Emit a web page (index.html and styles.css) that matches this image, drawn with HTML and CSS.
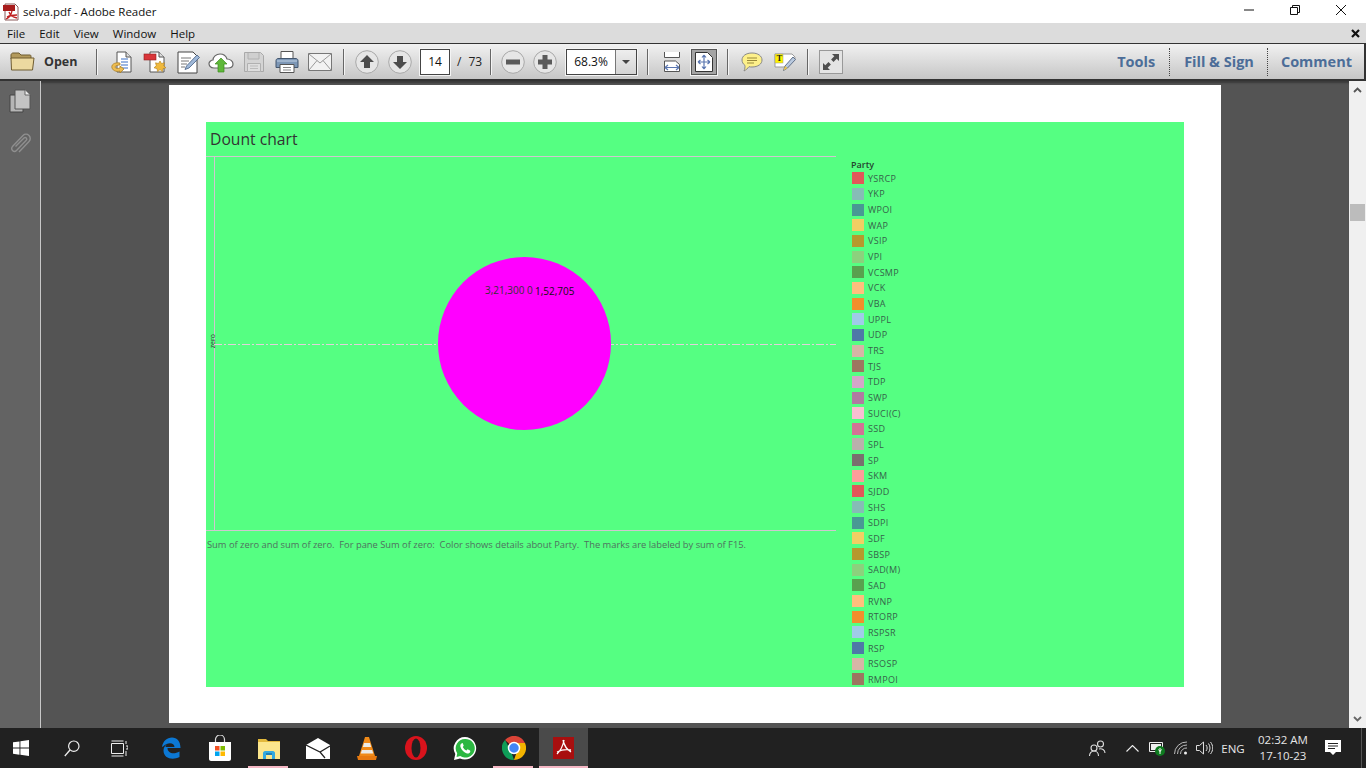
FILE: index.html
```html
<!DOCTYPE html>
<html lang="en">
<head>
    <meta charset="UTF-8">
    <title>selva.pdf - Adobe Reader</title>
    <link rel="stylesheet" href="styles.css">
</head>
<body>
    <!-- window title -->
    <div class="titlebar">
        <svg class="app-icon" width="17" height="18" viewBox="0 0 17 18">
            <path d="M2 1h10l3 3v13H2z" fill="#fff" stroke="#8a5a5a"/>
            <rect x="0" y="2" width="12" height="6" fill="#a81c1c"/>
            <path d="M6 9c1 3 3 5 8 6M9 8c-1 4-3 7-6 8M4 14c3-2 7-2 10-2" fill="none" stroke="#c02020" stroke-width="1.3"/>
        </svg>
        <span class="title-text">selva.pdf - Adobe Reader</span>
        <div class="win-buttons">
            <div class="win-btn"><svg width="12" height="12" viewBox="0 0 12 12"><path d="M1 6h10" stroke="#111" fill="none"/></svg></div>
            <div class="win-btn"><svg width="12" height="12" viewBox="0 0 12 12"><path d="M1.5 3.5h7v7h-7zM3.5 3.5v-2h7v7h-2" stroke="#111" fill="none"/></svg></div>
            <div class="win-btn"><svg width="12" height="12" viewBox="0 0 12 12"><path d="M1 1l10 10M11 1L1 11" stroke="#111" fill="none"/></svg></div>
        </div>
    </div>

    <!-- menu -->
    <div class="menubar">
        <span>File</span><span>Edit</span><span>View</span><span>Window</span><span>Help</span>
        <svg class="menu-close" width="9" height="9" viewBox="0 0 9 9"><path d="M1 1l7 7M8 1L1 8" stroke="#111" stroke-width="2.2" fill="none"/></svg>
    </div>

    <!-- toolbar -->
    <div class="toolbar">
        <div class="tb-folder">
            <svg width="25" height="21" viewBox="0 0 25 21">
                <path d="M1 4c0-1 1-2 2-2h6l2 2h9c1 0 1 1 1 2v2H1z" fill="#b39a5c" stroke="#6f5c30"/>
                <path d="M1.5 19L1 7h23l-1.500 12z" fill="#ecd9a0" stroke="#6f5c30"/>
            </svg>
        </div>
        <span class="tb-open">Open</span>
        <i class="tb-sep first"></i>

        <div class="tb-btn">
            <svg width="24" height="24" viewBox="0 0 24 24">
                <path d="M7 2h9l5 5v15H7z" fill="#fff" stroke="#555"/>
                <path d="M16 2v5h5" fill="#ddd" stroke="#555"/>
                <path d="M11 9h7M11 12h7M11 15h7M11 18h7" stroke="#3b6fc4"/>
                <path d="M10 13C4 12 1 15 2 18s5 4 8 3v2l4-4-4-3v2c-3 1-5 0-5-1s2-2 5-2z" fill="#eebd52" stroke="#a67a1e" stroke-width=".7"/>
            </svg>
        </div>
        <div class="tb-btn">
            <svg width="24" height="24" viewBox="0 0 24 24">
                <path d="M7 2h9l5 5v15H7z" fill="#fff" stroke="#555"/>
                <path d="M16 2v5h5" fill="#ddd" stroke="#555"/>
                <rect x="1" y="4" width="12" height="6" fill="#d9363a" stroke="#902020" stroke-width=".6"/>
                <path d="M17 11l1.500 2.500 3-.7-.8 3 2.300 2-3 .8-.6 3-2.400-2-2.400 2-.6-3-3-.8 2.300-2-.8-3 3 .7z" fill="#f0b93c" stroke="#b0801c" stroke-width=".6"/>
            </svg>
        </div>
        <div class="tb-btn">
            <svg width="24" height="24" viewBox="0 0 24 24">
                <path d="M2 2h15l4 4v17H2z" fill="#fff" stroke="#444"/>
                <path d="M5 8h10M5 11h8M5 14h6M5 17h4" stroke="#777"/>
                <path d="M21 5l2.500 2.500L13 18l-4 1.500L10.500 16z" fill="#9fb8d8" stroke="#445d82" stroke-width=".8"/>
            </svg>
        </div>
        <div class="tb-btn">
            <svg width="26" height="22" viewBox="0 0 26 22">
                <path d="M6 17C2 17 1 14 1 12.5S3 9 5 9c0-3 3-6 7-6s6 2 7 5c3 0 6 2 6 5s-2 4-5 4z" fill="#fff" stroke="#666" stroke-width="1.2"/>
                <path d="M13 7l6 6h-3v8h-6v-8H7z" fill="#5fb83a" stroke="#3d8a20" stroke-width=".7"/>
            </svg>
        </div>
        <div class="tb-btn">
            <svg width="22" height="22" viewBox="0 0 22 22">
                <path d="M1.5 1.5h16l3 3v16h-19z" fill="#d4d4d4" stroke="#a9a9a9"/>
                <path d="M5 2v6h11V2" fill="#cfcfcf" stroke="#b0b0b0"/>
                <path d="M4.5 12.5h13v8h-13z" fill="#dedede" stroke="#b0b0b0"/>
                <path d="M7 15h8M7 17.5h8" stroke="#bbb"/>
            </svg>
        </div>
        <div class="tb-btn">
            <svg width="24" height="24" viewBox="0 0 24 24">
                <path d="M6 1.5h12v7H6z" fill="#fff" stroke="#555"/>
                <path d="M3 8.5h18c1 0 2 1 2 2v7H1v-7c0-1 1-2 2-2z" fill="#7d97b6" stroke="#44576f"/>
                <path d="M2 11h20" stroke="#c3d3e6"/>
                <path d="M5 14.5h14v8H5z" fill="#fff" stroke="#555"/>
                <path d="M8 17.5h8M8 20h8" stroke="#888"/>
            </svg>
        </div>
        <div class="tb-btn">
            <svg width="24" height="18" viewBox="0 0 24 18">
                <path d="M.5.5h23v17H.5z" fill="#f2f2f2" stroke="#777"/>
                <path d="M1 1l11 9 11-9M1 17l8-9.500M23 17l-8-9.500" fill="none" stroke="#9a9a9a"/>
            </svg>
        </div>
        <i class="tb-sep after-mail"></i>

        <div class="tb-btn">
            <svg width="24" height="24" viewBox="0 0 24 24">
                <circle cx="12" cy="12" r="11.3" fill="#e6e6e6" stroke="#a8a8a8"/>
                <path d="M12 5l7 7h-4v6H9v-6H5z" fill="#4d4d4d"/>
            </svg>
        </div>
        <div class="tb-btn">
            <svg width="24" height="24" viewBox="0 0 24 24">
                <circle cx="12" cy="12" r="11.3" fill="#e6e6e6" stroke="#a8a8a8"/>
                <path d="M12 19l7-7h-4V6H9v6H5z" fill="#4d4d4d"/>
            </svg>
        </div>
        <div class="page-box">14</div>
        <span class="page-total"><b>/</b>73</span>
        <i class="tb-sep after-total"></i>

        <div class="tb-btn zoom-btn">
            <svg width="24" height="24" viewBox="0 0 24 24">
                <circle cx="12" cy="12" r="11.3" fill="#e6e6e6" stroke="#a8a8a8"/>
                <path d="M5 9.5h14v5H5z" fill="#5a5a5a"/>
            </svg>
        </div>
        <div class="tb-btn zoom-btn">
            <svg width="24" height="24" viewBox="0 0 24 24">
                <circle cx="12" cy="12" r="11.3" fill="#e6e6e6" stroke="#a8a8a8"/>
                <path d="M9.5 5h5v4.500H19v5h-4.500V19h-5v-4.500H5v-5h4.500z" fill="#5a5a5a"/>
            </svg>
        </div>
        <div class="zoom-box">
            <span class="zoom-value">68.3%</span>
            <span class="zoom-arrow"><i></i></span>
        </div>
        <i class="tb-sep after-zoom"></i>

        <div class="tb-btn">
            <svg width="18" height="20" viewBox="0 0 18 20">
                <path d="M1.5 0v5.500h15V0" fill="#fff" stroke="#555"/>
                <path d="M1.5 19.500V9h11l4 3.500v7z" fill="#fff" stroke="#555"/>
                <path d="M2 15.500h14M2 15.500l3-2.500M2 15.500l3 2.500M16 15.500l-3-2.500M16 15.500l-3 2.500" fill="none" stroke="#5a76b0" stroke-width="1.2"/>
            </svg>
        </div>
        <div class="tb-fit">
            <svg width="18" height="20" viewBox="0 0 18 20">
                <path d="M.5.5h12l5 5v14H.5z" fill="#fff" stroke="#333"/>
                <path d="M9 3v14M3 10h12M9 3L7 5.500M9 3l2 2.500M9 17l-2-2.500M9 17l2-2.500M3 10l2.500-2M3 10l2.500 2M15 10l-2.500-2M15 10l-2.500 2" fill="none" stroke="#5a76b0" stroke-width="1.2"/>
            </svg>
        </div>
        <i class="tb-sep after-fit"></i>

        <div class="tb-btn">
            <svg width="22" height="20" viewBox="0 0 22 20">
                <path d="M11 1c6 0 10 3 10 7s-4 7-10 7c-1 0-2 0-3-.3C7 16 5 18 3 19c1-2 1-4 1-5.500C2 12 1 10 1 8c0-4 4-7 10-7z" fill="#fdf08a" stroke="#888"/>
                <path d="M6 6h10M6 8.500h10M6 11h7" stroke="#99893a"/>
            </svg>
        </div>
        <div class="tb-btn">
            <svg width="22" height="20" viewBox="0 0 22 20">
                <path d="M1 2h17l3 3v2l-8 8H1z" fill="#fff" stroke="#999"/>
                <rect x="1" y="2" width="8" height="9" fill="#fef200" stroke="#999" stroke-width=".5"/>
                <text class="t-glyph" x="2.4" y="9.4">T</text>
                <path d="M19 5l2.500 2.500-8 8.500-4 2.500 1.500-4.500z" fill="#b9c9de" stroke="#55657f" stroke-width=".9"/>
                <path d="M9.5 18.500l1.500-4.500 2.500 2z" fill="#e8c452"/>
            </svg>
        </div>
        <i class="tb-sep after-note"></i>

        <div class="tb-full">
            <svg width="24" height="24" viewBox="0 0 24 24">
                <rect x=".5" y=".5" width="23" height="23" fill="#e4e4e4" stroke="#999"/>
                <path d="M13 4h7v7l-2.300-2.300-3.200 3.200-2.400-2.400 3.200-3.200zM11 20H4v-7l2.300 2.300 3.200-3.200 2.400 2.400-3.200 3.200z" fill="#4f4f4f"/>
            </svg>
        </div>

        <div class="tb-tabs">
            <span>Tools</span><i></i><span>Fill &amp; Sign</span><i></i><span>Comment</span>
        </div>
    </div>

    <div class="workspace">
        <div class="sidebar">
            <svg width="22" height="24" viewBox="0 0 22 24">
                <path d="M1 6h13v17H1z" fill="#b5b5b5" stroke="#444"/>
                <path d="M6 1h10l5 5v14H6z" fill="#c4c4c4" stroke="#555"/>
                <path d="M16 1v5h5" fill="#eee" stroke="#666"/>
            </svg>
            <svg class="side-clip" width="23" height="24" viewBox="0 0 23 24">
                <path d="M6.500 14.500L15 6a1.600 1.600 0 012.300 2.300L7.500 18.500a2.800 2.800 0 01-4-4L14 3.500a4.200 4.200 0 016 6L10 20" fill="none" stroke="#8f8f8f" stroke-width="1.400"/>
            </svg>
        </div>

        <div class="doc-area">
            <div class="page">
                <div class="dashboard">
                    <div class="chart-col">
                        <div class="chart-title">Dount chart</div>
                        <div class="plot">
                            <div class="axis-label">zero</div>
                            <div class="zero-line"></div>
                            <div class="pie"></div>
                            <span class="pie-label label-a">3,21,300</span>
                            <span class="pie-label label-b">0</span>
                            <span class="pie-label label-c">1,52,705</span>
                        </div>
                        <div class="caption">Sum of zero and sum of zero.  For pane Sum of zero:  Color shows details about Party.  The marks are labeled by sum of F15.</div>
                    </div>
                    <div class="legend">
                        <div class="legend-title">Party</div>
                        <div class="legend-list">
                            <div class="legend-row"><i class="c-red"></i>YSRCP</div>
                            <div class="legend-row"><i class="c-lteal"></i>YKP</div>
                            <div class="legend-row"><i class="c-teal"></i>WPOI</div>
                            <div class="legend-row"><i class="c-lyellow"></i>WAP</div>
                            <div class="legend-row"><i class="c-olive"></i>VSIP</div>
                            <div class="legend-row"><i class="c-lgreen"></i>VPI</div>
                            <div class="legend-row"><i class="c-green"></i>VCSMP</div>
                            <div class="legend-row"><i class="c-lorange"></i>VCK</div>
                            <div class="legend-row"><i class="c-orange"></i>VBA</div>
                            <div class="legend-row"><i class="c-lblue"></i>UPPL</div>
                            <div class="legend-row"><i class="c-blue"></i>UDP</div>
                            <div class="legend-row"><i class="c-tan"></i>TRS</div>
                            <div class="legend-row"><i class="c-brown"></i>TJS</div>
                            <div class="legend-row"><i class="c-lpurple"></i>TDP</div>
                            <div class="legend-row"><i class="c-purple"></i>SWP</div>
                            <div class="legend-row"><i class="c-lpink"></i>SUCI(C)</div>
                            <div class="legend-row"><i class="c-pink"></i>SSD</div>
                            <div class="legend-row"><i class="c-lgrey"></i>SPL</div>
                            <div class="legend-row"><i class="c-grey"></i>SP</div>
                            <div class="legend-row"><i class="c-salmon"></i>SKM</div>
                            <div class="legend-row"><i class="c-red"></i>SJDD</div>
                            <div class="legend-row"><i class="c-lteal"></i>SHS</div>
                            <div class="legend-row"><i class="c-teal"></i>SDPI</div>
                            <div class="legend-row"><i class="c-lyellow"></i>SDF</div>
                            <div class="legend-row"><i class="c-olive"></i>SBSP</div>
                            <div class="legend-row"><i class="c-lgreen"></i>SAD(M)</div>
                            <div class="legend-row"><i class="c-green"></i>SAD</div>
                            <div class="legend-row"><i class="c-lorange"></i>RVNP</div>
                            <div class="legend-row"><i class="c-orange"></i>RTORP</div>
                            <div class="legend-row"><i class="c-lblue"></i>RSPSR</div>
                            <div class="legend-row"><i class="c-blue"></i>RSP</div>
                            <div class="legend-row"><i class="c-tan"></i>RSOSP</div>
                            <div class="legend-row"><i class="c-brown"></i>RMPOI</div>
                        </div>
                    </div>
                </div>
            </div>
        </div>

        <div class="scrollbar">
            <svg width="9" height="6" viewBox="0 0 9 6"><path d="M1 5l3.500-3.500L8 5" fill="none" stroke="#555" stroke-width="1.8"/></svg>
            <div class="scroll-thumb"></div>
            <svg class="scroll-down" width="9" height="6" viewBox="0 0 9 6"><path d="M1 1l3.500 3.500L8 1" fill="none" stroke="#666" stroke-width="1.8"/></svg>
        </div>
    </div>

    <!-- windows taskbar -->
    <div class="taskbar">
        <div class="task-cell start">
            <svg width="16" height="16" viewBox="0 0 16 16"><path d="M0 2.300l6.500-.9v6.200H0zM7.400 1.300L16 0v7.600H7.400zM0 8.500h6.500v6.200L0 13.800zM7.400 8.500H16V16l-8.600-1.200z" fill="#fff"/></svg>
        </div>
        <div class="task-cell search">
            <svg width="16" height="17" viewBox="0 0 16 17"><circle cx="9.8" cy="6.2" r="5.2" fill="none" stroke="#eee" stroke-width="1.2"/><path d="M6 10L.8 16" stroke="#eee" stroke-width="1.3"/></svg>
        </div>
        <div class="task-cell taskview">
            <svg width="17" height="17" viewBox="0 0 17 17"><path d="M.5 3.500h12v10H.5zM.5 1h12M.5 16h12M15 1v3M15 6h2v3h-2M15 11v5" fill="none" stroke="#eee"/></svg>
        </div>
        <div class="task-cell first-app">
            <svg width="20" height="22" viewBox="0 0 20 22"><path d="M1 10C2 4 6 .5 11 .5c5 0 8.500 4 8.500 10.500H6.500c0 5 6 7 12 3.500v5.500c-7 3.500-16 1.500-16-6.500 0-3 1.500-5 4-6.500-1.200 1-1.800 2-2 3h9c0-4-6-6-11.500-.5z" fill="#0c78d4"/></svg>
        </div>
        <div class="task-cell">
            <svg width="24" height="26" viewBox="0 0 24 26">
                <path d="M7.500 7V4.500a4.500 4.500 0 019 0V7" fill="none" stroke="#ddd" stroke-width="1.2"/>
                <path d="M1 7h22v17c0 1-1 2-2 2H3c-1 0-2-1-2-2z" fill="#fff"/>
                <rect x="7" y="11" width="4.500" height="4.500" fill="#f25022"/><rect x="12.500" y="11" width="4.500" height="4.500" fill="#7fba00"/>
                <rect x="7" y="16.500" width="4.500" height="4.500" fill="#00a4ef"/><rect x="12.500" y="16.500" width="4.500" height="4.500" fill="#ffb900"/>
            </svg>
        </div>
        <div class="task-cell running">
            <svg width="22" height="21" viewBox="0 0 22 21">
                <path d="M0 1h8l2 2h12v2H0z" fill="#e3b93c"/>
                <path d="M0 4h22v17H0z" fill="#fce68c"/>
                <path d="M5 21v-6c0-1 1-2 2-2h8c1 0 2 1 2 2v6h-3v-4H8v4z" fill="#33a9e0"/>
                <path d="M8 15h6v2H8z" fill="#1f7fb6"/>
            </svg>
        </div>
        <div class="task-cell">
            <svg width="24" height="21" viewBox="0 0 24 21"><path d="M0 7L12 0l12 7v14H0z" fill="#fff"/><path d="M0 7l14 7 10-6M14 14l5 6" fill="none" stroke="#212121" stroke-width="1.2"/></svg>
        </div>
        <div class="task-cell">
            <svg width="20" height="24" viewBox="0 0 20 24">
                <path d="M8 1h4l6 19H2z" fill="#f08a18"/>
                <path d="M7 7h6l1.200 4H5.800zM4.800 14h10.400l1 3.500H3.800z" fill="#ecebe6"/>
                <path d="M0 20h20l-1 4H1z" fill="#e87a10"/>
            </svg>
        </div>
        <div class="task-cell">
            <svg width="22" height="24" viewBox="0 0 22 24"><ellipse cx="11" cy="12" rx="11" ry="12" fill="#d8131c"/><ellipse cx="11" cy="12" rx="4.500" ry="9.500" fill="#212121"/></svg>
        </div>
        <div class="task-cell">
            <svg width="24" height="25" viewBox="0 0 24 25">
                <path d="M12 1a11.300 11.300 0 00-9.700 17L1 24l6-1.500A11.300 11.300 0 1012 1z" fill="#fff"/>
                <path d="M12 3a9.300 9.300 0 00-7.800 14.300L3.600 21l3.700-1A9.300 9.300 0 1012 3z" fill="#2cb742"/>
                <path d="M8.500 7.500c-1 .5-1.500 2-1 3.500 1 3 3.500 5.500 6.500 6.500 1.500.3 3-.5 3.300-1.700l-.2-1.300-2.600-1.200-1 1.200c-1.500-.5-3-2-3.700-3.500l.9-1.200-1-2.700z" fill="#fff"/>
            </svg>
        </div>
        <div class="task-cell running">
            <svg width="24" height="24" viewBox="0 0 24 24">
                <path d="M12 12L3 4a12 12 0 0120 3H12z" fill="#db4437"/>
                <path d="M12 24A12 12 0 013 4l6 11z" fill="#0f9d58"/>
                <path d="M12 24a12 12 0 0011-17H12l3 8z" fill="#f4b400"/>
                <circle cx="12" cy="12" r="5.500" fill="#4285f4" stroke="#fff" stroke-width="1.5"/>
            </svg>
        </div>
        <div class="task-cell active">
            <svg width="21" height="22" viewBox="0 0 21 22">
                <rect width="21" height="22" fill="#a80f0f"/>
                <path d="M10 3c1 5 3 9 8 12M11 3c-1 6-4 11-7 14M4 15c4-2 9-3 14-2" fill="none" stroke="#fff" stroke-width="1.3"/>
            </svg>
        </div>

        <div class="tray">
            <div class="tray-cell people">
                <svg width="17" height="17" viewBox="0 0 17 17"><circle cx="11.500" cy="4" r="3" fill="none" stroke="#ddd" stroke-width="1.1"/><circle cx="5" cy="8" r="3" fill="none" stroke="#ddd" stroke-width="1.1"/><path d="M.5 16c0-3 2-5 4.500-5s4.500 2 4.500 5M10 9c3-1 6 1 6 4" fill="none" stroke="#ddd" stroke-width="1.1"/></svg>
            </div>
            <div class="tray-cell chevron">
                <svg width="13" height="7" viewBox="0 0 13 7"><path d="M.5 6.500l6-6 6 6" fill="none" stroke="#eee" stroke-width="1.1"/></svg>
            </div>
            <div class="tray-cell battery">
                <svg width="16" height="16" viewBox="0 0 16 16"><path d="M.5 2.500h13v9H.5z" fill="none" stroke="#eee"/><rect x="2" y="4" width="10" height="6" fill="#eee"/><circle cx="11" cy="11" r="5" fill="#0e7a1f"/><path d="M11 8v6M9.500 9.500l1.500 2 1.500-2" fill="none" stroke="#fff"/></svg>
            </div>
            <div class="tray-cell wifi">
                <svg width="14" height="14" viewBox="0 0 14 14"><path d="M.5 13A12 12 0 0113 1M3.500 13A9 9 0 0113 4M6.500 13A6 6 0 0113 7" fill="none" stroke="#bbb"/><circle cx="11.500" cy="12" r="1.500" fill="#eee"/></svg>
            </div>
            <div class="tray-cell volume">
                <svg width="17" height="14" viewBox="0 0 17 14"><path d="M.5 4.500h3l4-3.500v12l-4-3.500h-3z" fill="none" stroke="#ddd"/><path d="M10 4c1.500 2 1.500 4 0 6M12.500 2.500c2 3 2 6 0 9M14.500 1c3 4 3 8 0 12" fill="none" stroke="#ddd"/></svg>
            </div>
            <div class="tray-lang">ENG</div>
            <div class="tray-clock"><span>02:32 AM</span><span>17-10-23</span></div>
            <div class="tray-cell notify">
                <svg width="16" height="16" viewBox="0 0 16 16"><path d="M0 0h16v12h-5l-3 3-3-3H0z" fill="#fff"/><path d="M3 3.500h10M3 6h10M3 8.500h7" stroke="#222"/></svg>
            </div>
            <div class="show-desktop"></div>
        </div>
    </div>
</body>
</html>
```

FILE: styles.css
```css
html, body {
    margin: 0;
    padding: 0;
    height: 100%;
    overflow: hidden;
}

body {
    width: 1366px;
    height: 768px;
    display: flex;
    flex-direction: column;
    font-family: 'Open Sans', sans-serif;
    font-size: 12px;
    color: #111;
    background: #fff;
}

svg {
    display: block;
}

/* title bar */
.titlebar {
    height: 23px;
    display: flex;
    align-items: center;
    background: #fff;
    padding-left: 3px;
    flex: none;
}

.app-icon {
    margin-right: 3px;
}

.title-text {
    font-size: 11.5px;
    line-height: 23px;
    white-space: nowrap;
}

.win-buttons {
    margin-left: auto;
    display: flex;
    padding-right: 2px;
    margin-top: -4px;
}

.win-btn {
    width: 46px;
    display: flex;
    justify-content: center;
}

/* menu */
.menubar {
    height: 20px;
    flex: none;
    display: flex;
    align-items: center;
    gap: 14px;
    padding-left: 7px;
    background: #dcdcdc;
    font-size: 11.5px;
}

.menu-close {
    margin-left: auto;
    margin-right: 6px;
}

/* toolbar */
.toolbar {
    height: 38px;
    flex: none;
    box-sizing: border-box;
    width: 1366px;
    display: flex;
    align-items: center;
    padding-left: 5px;
    border: 1px solid #333;
    border-width: 1px 2px 2px 0;
    background: linear-gradient(#f1f1f1, #c6c6c6);
}

.tb-folder {
    width: 34px;
    display: flex;
    justify-content: center;
}

.tb-open {
    width: 32px;
    margin-left: 5px;
    font-weight: 700;
    font-size: 12.5px;
    color: #333;
    white-space: nowrap;
}

.tb-sep {
    width: 1px;
    height: 26px;
    background: #666;
    box-shadow: 1px 0 0 #f4f4f4;
    margin-left: 7px;
    flex: none;
}

.tb-sep.first { margin-left: 20px; }
.tb-sep.after-total { margin-left: 3px; }
.tb-sep.after-zoom { margin-left: 10px; }
.tb-sep.after-fit { margin-left: 10px; }
.tb-sep.after-note { margin-left: 6px; }

.tb-btn {
    width: 33px;
    display: flex;
    justify-content: center;
    flex: none;
}

.tb-sep + .tb-btn { margin-left: 7px; }
.tb-sep.first + .tb-btn { margin-left: 8px; }
.tb-sep.after-mail + .tb-btn { margin-left: 6px; }
.tb-sep.after-total + .tb-btn { margin-left: 6px; }

.zoom-btn {
    width: 32px;
}

.page-box {
    width: 30px;
    height: 26px;
    margin-left: 4px;
    box-sizing: border-box;
    border: 1px solid #444;
    outline: 1px solid #f4f4f4;
    background: #fff;
    text-align: center;
    line-height: 24px;
    flex: none;
}

.page-total {
    width: 30px;
    white-space: nowrap;
    color: #222;
    font-size: 12px;
    padding-left: 7px;
    flex: none;
}

.page-total b {
    font-weight: 400;
    margin-right: 7px;
}

.zoom-box {
    width: 71px;
    height: 26px;
    margin-left: 5px;
    box-sizing: border-box;
    display: flex;
    border: 1px solid #444;
    outline: 1px solid #f4f4f4;
    background: #fff;
    flex: none;
}

.zoom-value {
    width: 48px;
    text-align: center;
    line-height: 24px;
}

.zoom-arrow {
    flex: 1;
    border-left: 1px solid #777;
    background: linear-gradient(#eee, #d4d4d4);
    display: flex;
    align-items: center;
    justify-content: center;
}

.zoom-arrow i {
    width: 0;
    height: 0;
    border: 4px solid transparent;
    border-top: 4px solid #444;
    border-bottom: 0;
}

.tb-fit {
    width: 26px;
    height: 26px;
    margin-left: 3px;
    box-sizing: border-box;
    background: #a4a4a4;
    border: 1px solid #555;
    outline: 1px solid #f4f4f4;
    display: flex;
    align-items: center;
    justify-content: center;
    flex: none;
}

.tb-full {
    margin-left: 11px;
    flex: none;
}

.tb-tabs {
    margin-left: auto;
    display: flex;
    align-items: center;
    padding-right: 12px;
    font-weight: 700;
    font-size: 14.5px;
    color: #4c6d98;
    white-space: nowrap;
}

.tb-tabs i {
    width: 0;
    height: 28px;
    margin: 0 14px;
    border-left: 1px dotted #444;
}

.tb-tabs i:last-of-type {
    margin: 0 13px;
}

/* main area */
.workspace {
    flex: 1;
    display: flex;
    min-height: 0;
    background: #545454;
}

.sidebar {
    width: 40px;
    flex: none;
    background: #636363;
    border-right: 1px solid #c8c8c8;
    display: flex;
    flex-direction: column;
    align-items: center;
    padding-top: 8px;
}

.side-clip {
    margin-top: 19px;
}

.doc-area {
    flex: 1;
    display: flex;
    justify-content: center;
    padding-top: 4px;
    min-width: 0;
    box-shadow: inset 0 3px 2px -1px #3a3a3a;
}

.page {
    width: 1052px;
    height: 638px;
    box-sizing: border-box;
    padding: 37px 37px 36px;
    background: #fff;
    flex: none;
}

.dashboard {
    height: 565px;
    display: flex;
    background: #55ff82;
    overflow: hidden;
}

.chart-col {
    width: 630px;
    flex: none;
}

.chart-title {
    height: 34px;
    padding-left: 4px;
    font-size: 15.7px;
    line-height: 35px;
    color: #333;
}

.plot {
    position: relative;
    height: 375px;
    box-sizing: border-box;
    border-top: 1px solid #cfc8cf;
    border-bottom: 1px solid #cfc8cf;
}

.plot::before {
    content: "";
    position: absolute;
    left: 8px;
    top: 0;
    bottom: 0;
    width: 1px;
    background: #cfc8cf;
}

.zero-line {
    position: absolute;
    left: 8px;
    right: 0;
    top: 187px;
    height: 1px;
    background: repeating-linear-gradient(90deg, #e2d2da 0 8px, transparent 8px 10px, #e2d2da 10px 12px, transparent 12px 14px);
}

.axis-label {
    position: absolute;
    left: 3px;
    top: 177px;
    writing-mode: vertical-rl;
    transform: rotate(180deg);
    font-size: 7px;
    line-height: 8px;
    color: #333;
}

.pie {
    position: absolute;
    left: 232px;
    top: 100px;
    width: 173px;
    height: 173px;
    border-radius: 50%;
    background: #ff00ff;
}

.pie-label {
    position: absolute;
    font-size: 10px;
    line-height: 12px;
    color: #333;
    white-space: nowrap;
}

.label-a { left: 279px; top: 127px; }
.label-b { left: 321px; top: 127px; }
.label-c { left: 329px; top: 128px; color: #111; }

.caption {
    padding: 8px 0 0 1px;
    font-size: 9.33px;
    line-height: 12px;
    white-space: pre;
    color: #4f7060;
}

.legend {
    margin-left: 16px;
    padding-top: 37px;
    font-size: 9px;
}

.legend-title {
    margin-left: -1px;
    line-height: 11.5px;
    font-weight: 600;
    color: #24452f;
}

.legend-list {
    display: grid;
    grid-auto-rows: 15.66px;
}

.legend-row {
    display: flex;
    align-items: center;
    color: #35634a;
    white-space: nowrap;
    letter-spacing: .3px;
}

.legend-row i {
    width: 12px;
    height: 12px;
    margin-right: 4px;
    flex: none;
}

.c-red { background: #e15759; }
.c-lteal { background: #86bcb6; }
.c-teal { background: #499894; }
.c-lyellow { background: #f1ce63; }
.c-olive { background: #b6992d; }
.c-lgreen { background: #8cd17d; }
.c-green { background: #59a14f; }
.c-lorange { background: #ffbe7d; }
.c-orange { background: #f28e2b; }
.c-lblue { background: #a0cbe8; }
.c-blue { background: #4e79a7; }
.c-tan { background: #d7b5a6; }
.c-brown { background: #9d7660; }
.c-lpurple { background: #d4a6c8; }
.c-purple { background: #b07aa1; }
.c-lpink { background: #fabfd2; }
.c-pink { background: #d37295; }
.c-lgrey { background: #bab0ac; }
.c-grey { background: #79706e; }
.c-salmon { background: #ff9d9a; }

/* scrollbar */
.scrollbar {
    width: 17px;
    flex: none;
    background: #f0f0f0;
    display: flex;
    flex-direction: column;
    align-items: center;
    padding-top: 6px;
    box-sizing: border-box;
}

.scroll-thumb {
    width: 15px;
    height: 17px;
    margin-top: 111px;
    background: #bcbcbc;
}

.scroll-down {
    margin-top: auto;
    margin-bottom: 6px;
}

.t-glyph {
    font-family: 'Liberation Serif', serif;
    font-size: 8.5px;
    font-weight: 700;
    fill: #222;
}

/* taskbar */
.taskbar {
    height: 40px;
    flex: none;
    display: flex;
    background: #212121;
    color: #e6e6e6;
}

.task-cell {
    position: relative;
    width: 49px;
    height: 40px;
    display: flex;
    align-items: center;
    justify-content: center;
    flex: none;
}

.task-cell.start { width: 42px; }
.task-cell.search { width: 60px; }
.task-cell.taskview { width: 34px; }
.task-cell.first-app { margin-left: 10px; }

.task-cell.running::after,
.task-cell.active::after {
    content: "";
    position: absolute;
    bottom: 0;
    left: 4px;
    right: 5px;
    height: 2px;
    background: #f5b7c4;
}

.task-cell.active {
    margin-left: 1px;
    background: #4a4a4a;
}

.task-cell.active::after {
    left: 0;
    right: 0;
}

.tray {
    margin-left: auto;
    display: flex;
    align-items: center;
    height: 40px;
}

.tray-cell {
    display: flex;
    justify-content: center;
    flex: none;
}

.people { width: 24px; }
.chevron { width: 24px; margin-left: 11px; }
.battery { width: 24px; margin-left: 1px; }
.wifi { width: 22px; margin-left: 1px; }
.volume { width: 22px; margin-left: 1px; }

.tray-lang {
    width: 34px;
    margin-left: 1px;
    text-align: center;
    font-size: 11.5px;
}

.tray-clock {
    width: 66px;
    display: flex;
    flex-direction: column;
    align-items: center;
    font-size: 11.5px;
    line-height: 16px;
}

.notify {
    width: 34px;
}

.show-desktop {
    width: 1px;
    height: 40px;
    margin-left: 11px;
    margin-right: 4px;
    background: #555;
}
```
